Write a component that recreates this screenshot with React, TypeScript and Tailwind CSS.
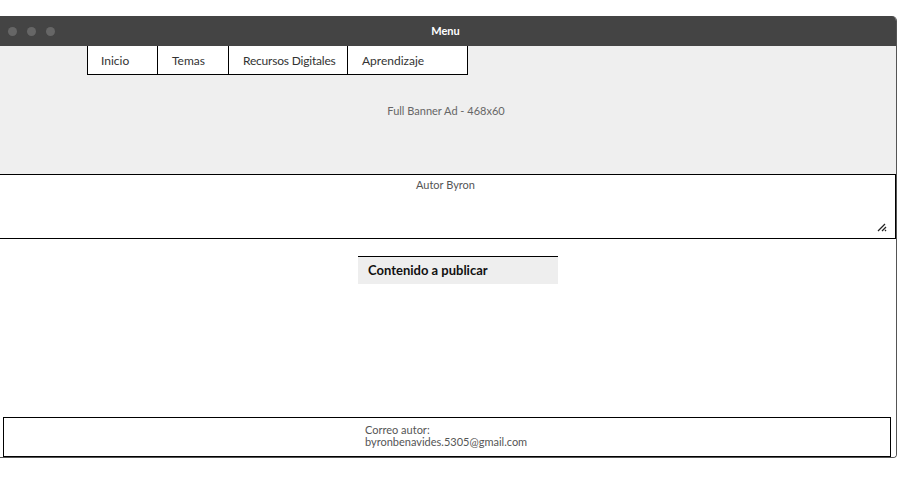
import React from "react";

const font = { fontFamily: "Lato, 'Open Sans', sans-serif" };

export default function App() {
  return (
    <div className="w-[901px] h-[477px] bg-white overflow-hidden pt-[16px]" style={font}>
      <div className="w-[897px] h-[442px] flex flex-col rounded-tr-[5px] rounded-br-[4px] border-r border-b border-[#555] overflow-hidden">
        {/* title bar */}
        <div className="h-[30px] bg-[#444444] flex items-center relative shrink-0">
          <div className="flex gap-[10px] pl-[8px]">
            <span className="w-[9px] h-[9px] rounded-full bg-[#666666]" />
            <span className="w-[9px] h-[9px] rounded-full bg-[#666666]" />
            <span className="w-[9px] h-[9px] rounded-full bg-[#666666]" />
          </div>
          <div className="flex-1 text-center text-white text-[11px] font-bold pr-[60px] pt-[1px]">Menu</div>
        </div>
        {/* banner area */}
        <div className="h-[128px] bg-[#efefef] shrink-0 flex flex-col">
          <div className="flex ml-[87px] h-[30px] -mt-px">
            <div className="w-[71px] border border-black bg-white text-[12px] text-[#333] flex items-center pl-[13px] pt-[2px]">Inicio</div>
            <div className="w-[71px] border border-l-0 border-black bg-white text-[12px] text-[#333] flex items-center pl-[14px] pt-[2px]">Temas</div>
            <div className="w-[119px] border border-l-0 border-black bg-white text-[12px] text-[#333] flex items-center pl-[14px] pt-[2px] tracking-[-0.2px]">Recursos Digitales</div>
            <div className="w-[120px] border border-l-0 border-black bg-white text-[12px] text-[#333] flex items-center pl-[14px] pt-[2px]">Aprendizaje</div>
          </div>
          <div className="text-center text-[11px] text-[#666] mt-[28px] pr-[4px]">Full Banner Ad - 468x60</div>
        </div>
        {/* textarea */}
        <div className="h-[65px] border border-black border-l-0 bg-white relative shrink-0">
          <div className="text-center text-[11px] text-[#555] pt-[2px] pr-[4px]">Autor Byron</div>
          <svg className="absolute right-[8px] bottom-[6px]" width="10" height="10" viewBox="0 0 10 10">
            <path d="M1 9 L8 2 M5 9 L9 5" stroke="#222" strokeWidth="1.3" />
            <path d="M8 9 L9 8" stroke="#222" strokeWidth="1.3" />
          </svg>
        </div>
        {/* content */}
        <div className="flex-1 bg-white flex flex-col">
          <div className="ml-[358px] mt-[17px] w-[200px] h-[28px] bg-[#eeeeee] border-t border-black text-[13px] font-bold text-[#111] flex items-center pl-[10px]">
            Contenido a publicar
          </div>
          <div className="flex-1" />
          <div className="ml-[3px] w-[888px] h-[40px] border border-black flex flex-col justify-center pl-[361px] text-[11px] text-[#555] leading-[12px] pb-[2px]">
            <span>Correo autor:</span>
            <span>byronbenavides.5305@gmail.com</span>
          </div>
        </div>
      </div>
    </div>
  );
}
